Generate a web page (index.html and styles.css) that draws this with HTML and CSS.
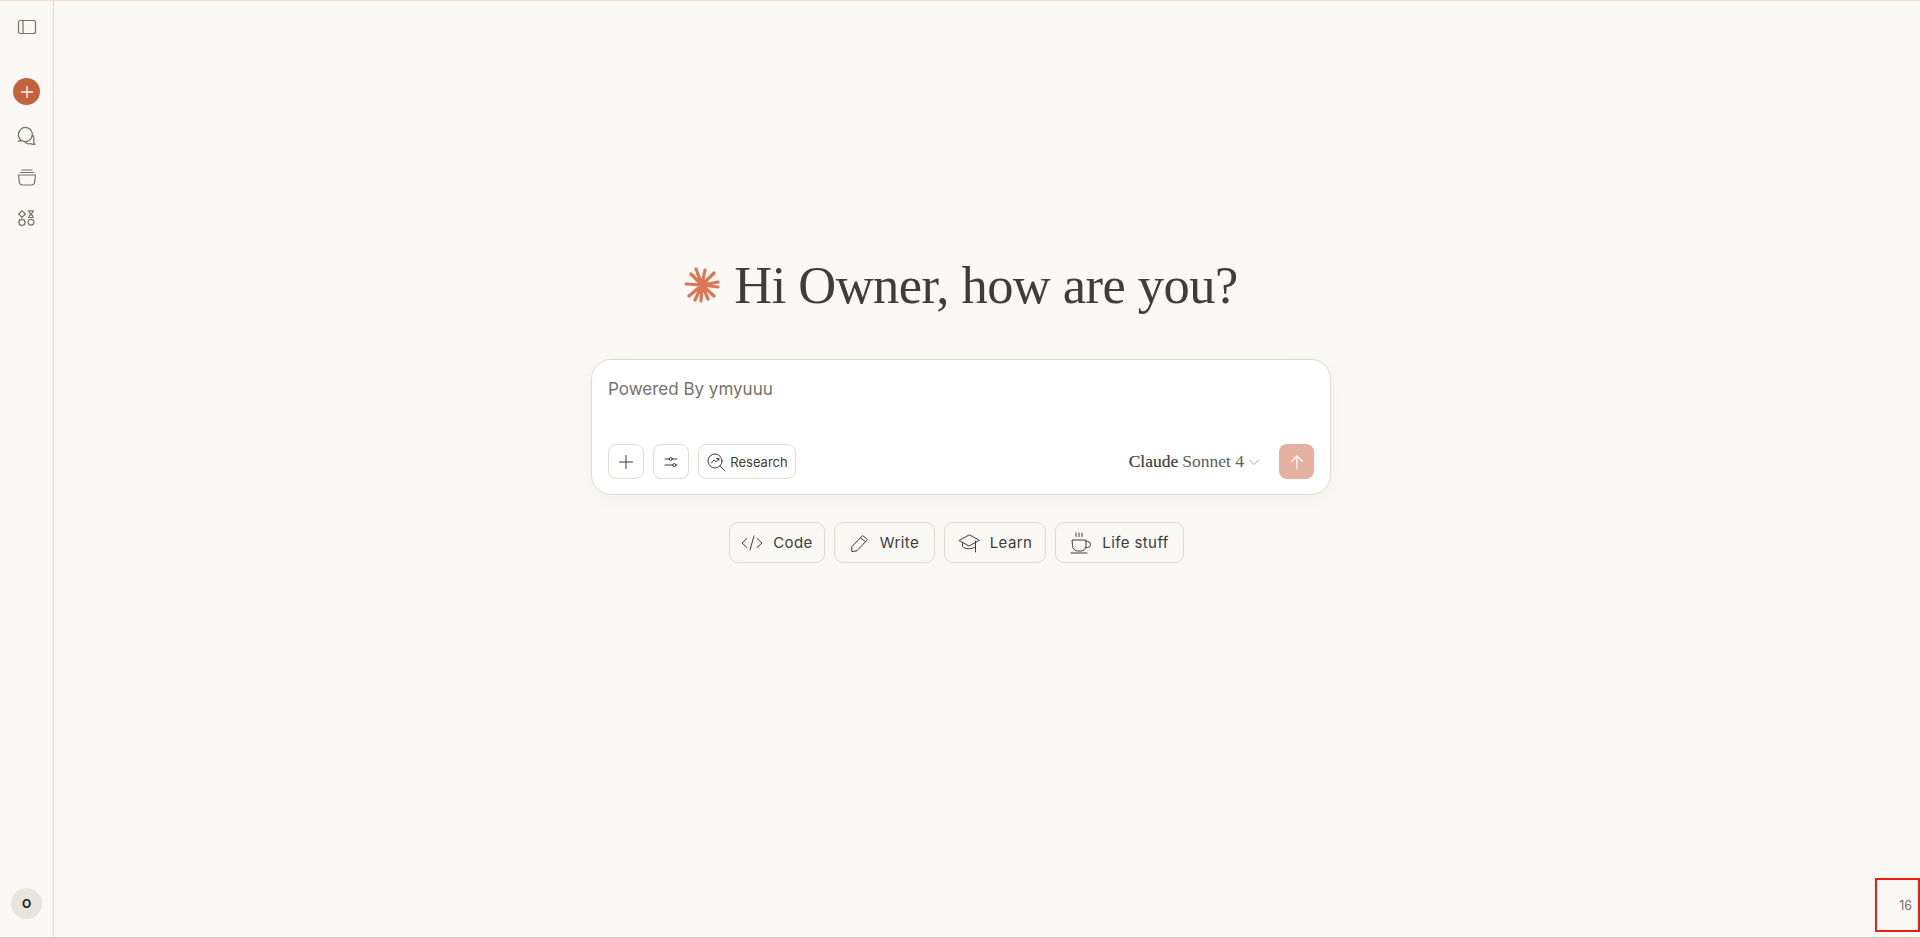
FILE: index.html
```html
<!DOCTYPE html>
<html lang="en">
<head>
  <meta charset="UTF-8">
  <title>Claude</title>
  <link rel="stylesheet" href="styles.css">
</head>
<body>

<div class="app">
  <!-- Sidebar -->
  <nav class="sidebar">
    <button class="side-btn panel-btn">
      <svg width="20" height="20" viewBox="0 0 20 20" class="ico"><rect x="1.500" y="3.500" width="17" height="13" rx="2"/><path d="M6 3.500v13"/></svg>
    </button>
    <button class="new-btn">
      <svg width="16" height="16" viewBox="0 0 16 16" class="ico-white"><path d="M8 2.500v11M2.500 8h11"/></svg>
    </button>
    <button class="side-btn">
      <svg width="20" height="20" viewBox="0 0 20 20" class="ico"><path d="M1 15c1.300 0 2.200-.5 2.800-1.200A7 7 0 1 1 8.500 15.500c-1.500 0-2.800-.4-3.800-1.100-1 .6-2.300.8-3.700.6z"/><path d="M15.500 8.500c2 3 1.500 5.500 1 7 .2 1.300.8 2.200 1.500 2.800-2 .2-3.500 0-4.500-.8-2 .6-4.500.2-6-1.800"/></svg>
    </button>
    <button class="side-btn">
      <svg width="20" height="20" viewBox="0 0 20 20" class="ico"><path d="M1.500 8h17l-.9 7.500a3 3 0 0 1-3 2.500H5.400a3 3 0 0 1-3-2.500z"/><path d="M3.500 5.500h13M5 3h10"/></svg>
    </button>
    <button class="side-btn">
      <svg width="20" height="20" viewBox="0 0 20 20" class="ico"><path d="M5 2.700L8.300 6 5 9.300 1.700 6z"/><path d="M11.500 2.800h5M11.500 9.500h5M12.200 2.800v1c0 1.300 1.600 1.600 1.600 2.400s-1.600 1-1.600 2.300v1M15.800 2.800v1c0 1.300-1.600 1.600-1.600 2.400s1.600 1 1.600 2.300v1"/><path d="M5 10.800l1 1.100h1.600v1.500l1 1-1 1v1.400H6l-1 1-1-1H2.400v-1.400l-1-1 1-1v-1.500H4z"/><circle cx="14" cy="14.300" r="2.900"/></svg>
    </button>
    <div class="avatar">O</div>
  </nav>

  <!-- Main column -->
  <main class="main">
    <div class="greeting">
      <svg class="spark" width="36" height="36" viewBox="0 0 36 36">
        <g stroke="#d97757" stroke-width="3.200" stroke-linecap="round">
          <path d="M18 18L12 2M18 18L21 3M18 18L7 7M18 18L30 6M18 18L2 17M18 18L34 15M18 18L34 20M18 18L5 29M18 18L30 29M18 18L11 33M18 18L17 34M18 18L24 32"/>
        </g>
      </svg>
      <h1>Hi Owner, how are you?</h1>
    </div>

    <div class="composer">
      <div class="placeholder">Powered By ymyuuu</div>
      <div class="composer-row">
        <button class="tool-btn">
          <svg width="16" height="16" viewBox="0 0 16 16" class="ico-dark"><path d="M8 1.500v13M1.500 8h13"/></svg>
        </button>
        <button class="tool-btn">
          <svg width="16" height="16" viewBox="0 0 16 16" class="ico-dark"><path d="M2 5h4.500M9 5h5M2 11h8M12.500 11H14"/><circle cx="7.700" cy="5" r="1.500"/><circle cx="11.200" cy="11" r="1.500"/></svg>
        </button>
        <button class="tool-btn research">
          <svg width="20" height="20" viewBox="0 0 20 20" class="ico-dark"><circle cx="9" cy="9" r="7"/><path d="M14 14l5 5M5.500 11l2.500-3 2 1.800 2.700-3.300M10.800 6.500h2v2"/></svg>
          Research
        </button>
        <div class="model">
          <span class="model-name">Claude</span> Sonnet 4
          <svg width="12" height="12" viewBox="0 0 12 12" class="chev"><path d="M1.500 4l4.500 4.500L10.500 4"/></svg>
        </div>
        <button class="send-btn">
          <svg width="16" height="16" viewBox="0 0 16 16" class="ico-white"><path d="M8 14.500V2M2.800 7.200L8 2l5.200 5.200"/></svg>
        </button>
      </div>
    </div>

    <div class="chips">
      <button class="chip chip-code">
        <svg width="22" height="20" viewBox="0 0 22 20" class="ico-dark"><path d="M6 5.500L1 10l5 4.500M16 5.500l5 4.500-5 4.500M13 3L9 17"/></svg>
        Code
      </button>
      <button class="chip chip-write">
        <svg width="20" height="20" viewBox="0 0 20 20" class="ico-dark"><path d="M2 13.500L12.500 2.500l5 4L7 17.800l-4.800.7z"/><path d="M10.500 4.700l5 4"/></svg>
        Write
      </button>
      <button class="chip chip-learn">
        <svg width="22" height="20" viewBox="0 0 22 20" class="ico-dark"><path d="M11 2L1 7.500 11 13l10-5.500z"/><path d="M4.500 9.500v4c2 2.500 9.500 3.500 13 0v-4M17.500 8v11"/></svg>
        Learn
      </button>
      <button class="chip chip-life">
        <svg width="22" height="22" viewBox="0 0 22 22" class="ico-dark"><path d="M2.500 8h13.500v6a5 5 0 0 1-5 5H7.500a5 5 0 0 1-5-5zM16 9.500h1.500a2.800 2.800 0 0 1 0 6H15.500M1 21h16M6 1v3.500M9 1v3.500M12 1v3.500"/></svg>
        Life stuff
      </button>
    </div>
  </main>
</div>

<div class="counter">16</div>

</body>
</html>
```

FILE: styles.css
```css
/* Base */
* {
  box-sizing: border-box;
}
body {
  margin: 0;
  height: 938px;
  overflow: hidden;
  background: #faf9f5;
  font-family: "Inter", "Noto Sans", sans-serif;
  color: #3d3d3a;
}
button {
  font-family: inherit;
  color: inherit;
  background: none;
  border: none;
  padding: 0;
}
svg {
  display: block;
  fill: none;
  stroke-linecap: round;
  stroke-linejoin: round;
}
.ico {
  stroke: #73726c;
  stroke-width: 1.200;
}
.ico-dark {
  stroke: #3d3d3a;
  stroke-width: 1;
}
.ico-white {
  stroke: #fff;
  stroke-width: 1.300;
}

.app {
  display: flex;
  height: 100%;
  border-top: 1px solid #f9dccf;
  border-bottom: 1px solid #c9c8c2;
}

/* Sidebar */
.sidebar {
  width: 54px;
  flex-shrink: 0;
  border-right: 1px solid #dddcd5;
  display: flex;
  flex-direction: column;
  align-items: center;
  padding-top: 16px;
  padding-bottom: 18px;
  gap: 21px;
}
.side-btn {
  display: flex;
  height: 20px;
  align-items: center;
  justify-content: center;
}
.panel-btn {
  margin-bottom: 20px;
}
.new-btn {
  width: 27px;
  height: 27px;
  border-radius: 50%;
  background: #c6613f;
  display: flex;
  align-items: center;
  justify-content: center;
}
.avatar {
  margin-top: auto;
  width: 31px;
  height: 31px;
  border-radius: 50%;
  background: #e8e6dc;
  display: flex;
  align-items: center;
  justify-content: center;
  font-size: 12px;
  font-weight: 700;
  color: #1f1e1d;
}

/* Main */
.main {
  flex: 1;
  display: flex;
  flex-direction: column;
  align-items: center;
  padding-top: 252px;
  padding-right: 52px;
}
.greeting {
  display: flex;
  align-items: center;
  gap: 14px;
  height: 64px;
}
.greeting h1 {
  margin: 0;
  font-family: "Liberation Serif", serif;
  font-size: 52.500px;
  font-weight: 400;
  letter-spacing: -0.55px;
  color: #3d3d3a;
  white-space: nowrap;
}
.composer {
  margin-top: 42px;
  width: 740px;
  height: 136px;
  background: #fff;
  border: 1px solid #dddcd5;
  border-radius: 20px;
  box-shadow: 0 4px 16px rgba(0,0,0,0.035);
  padding: 19px 16px 15px;
  display: flex;
  flex-direction: column;
  justify-content: space-between;
}
.placeholder {
  font-size: 17px;
  color: #73726c;
}
.composer-row {
  display: flex;
  align-items: center;
  gap: 9px;
}
.tool-btn {
  width: 36px;
  height: 35px;
  border: 1px solid #dddcd5;
  border-radius: 8px;
  display: flex;
  align-items: center;
  justify-content: center;
}
.research {
  width: 98px;
  gap: 4px;
  font-size: 13px;
}
.model {
  margin-left: auto;
  margin-right: 10px;
  display: flex;
  align-items: center;
  gap: 4px;
  font-family: "Liberation Serif", serif;
  font-size: 17.500px;
  color: #5e5d59;
}
.model-name {
  color: #3d3d3a;
  -webkit-text-stroke: 0.2px #3d3d3a;
}
.chev {
  stroke: #a3a29c;
  stroke-width: 1;
}
.send-btn {
  width: 35px;
  height: 35px;
  border-radius: 8px;
  background: #e4b1a0;
  display: flex;
  align-items: center;
  justify-content: center;
}

/* Shortcut chips */
.chips {
  margin-top: 27px;
  display: flex;
  gap: 9px;
  margin-right: 9px;
}
.chip {
  height: 41px;
  border: 1px solid #dddcd5;
  border-radius: 9px;
  display: flex;
  align-items: center;
  justify-content: center;
  gap: 10px;
  font-size: 15px;
  letter-spacing: 0.4px;
}
.chip-code {
  width: 96px;
}
.chip-write {
  width: 101px;
}
.chip-learn {
  width: 102px;
}
.chip-life {
  width: 129px;
}

/* Page counter box */
.counter {
  position: absolute;
  right: 0;
  top: 878px;
  width: 45px;
  height: 54px;
  border: 2px solid #f01c10;
  display: flex;
  align-items: center;
  justify-content: flex-end;
  padding-right: 6px;
  font-size: 12.500px;
  color: #73726c;
}
```
